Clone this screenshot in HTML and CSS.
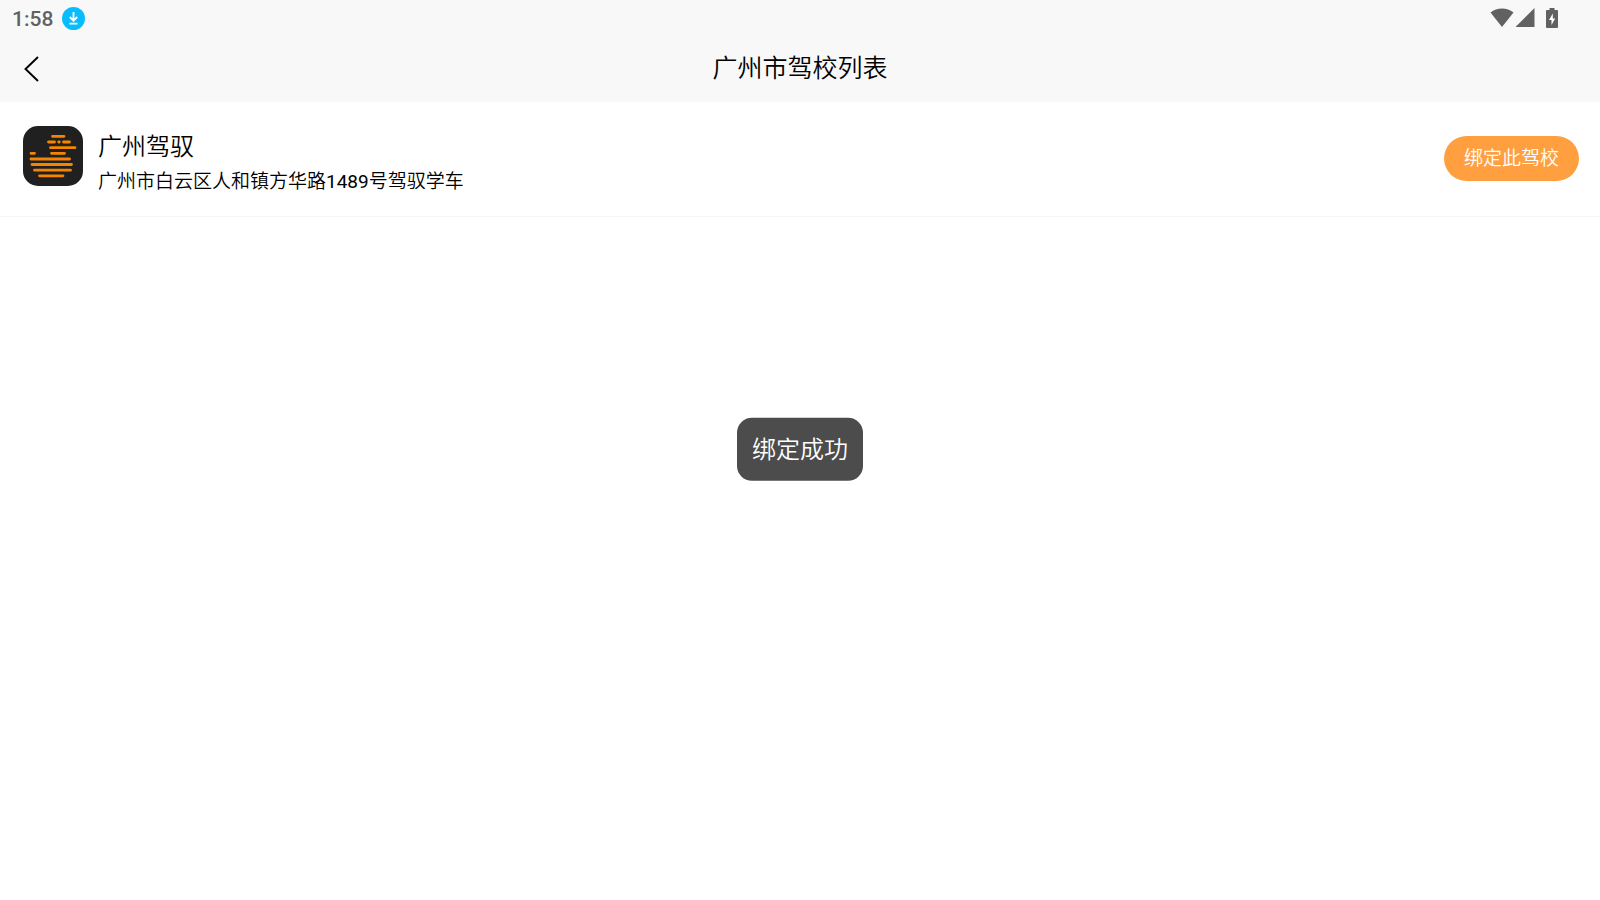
FILE: index.html
```html
<!DOCTYPE html>
<html lang="zh-CN">
<head>
<meta charset="utf-8">
<meta name="viewport" content="width=device-width, initial-scale=1">
<title>广州市驾校列表</title>
<link rel="stylesheet" href="styles.css">
</head>
<body>
<div class="top">
  <div class="status">
    <time class="clock">1:58</time>
    <svg class="download" viewBox="0 0 23 23" width="23" height="23" aria-hidden="true">
      <circle cx="11.5" cy="11.5" r="11.5" fill="#08bdfd"/>
      <path d="M11.5 5v8.500M7.800 10l3.700 3.800L15.200 10M7.500 16.700h8" fill="none" stroke="#fff" stroke-width="1.800"/>
    </svg>
    <div class="indicators">
      <svg viewBox="0 0 24 20" width="24" height="20" aria-hidden="true"><path d="M.5 4.500Q5.500.5 12 .5t11.500 4L12 19Z" fill="#616161"/></svg>
      <svg viewBox="0 0 20 20" width="20" height="20" aria-hidden="true"><path d="M19.500 0v19H.5Z" fill="#616161"/></svg>
      <svg class="battery" viewBox="0 0 12 20" width="12" height="20" aria-hidden="true"><path d="M3.500 0h5v2H11q1 0 1 1v16q0 1-1 1H1q-1 0-1-1V3q0-1 1-1h2.500Z" fill="#616161"/><path d="M6.800 5.500v5h2.400L5.500 17v-5H3Z" fill="#fff"/></svg>
    </div>
  </div>
  <header class="navbar">
    <button class="back" type="button" aria-label="返回">
      <svg viewBox="0 0 16 26" width="16" height="26" aria-hidden="true"><path d="M15 1L2.500 13 15 25" fill="none" stroke="#000" stroke-width="1.900"/></svg>
    </button>
    <h1 class="title">广州市驾校列表</h1>
  </header>
</div>
<main>
  <ul class="schools">
    <li class="school">
      <svg class="logo" viewBox="0 0 60 60" width="60" height="60" role="img" aria-label="广州驾驭">
        <rect width="60" height="60" rx="15" fill="#202020"/>
        <path d="M29.500 10.300h11.500M25.500 16h6M35.700 16h.6M40.500 16h6M27.500 21.700h24.500M8 27.300h3.500M28.500 27.300h13M8 33h38.500M9 38.500h39.500M11.500 44.200h36M16.500 49.800h23.500" fill="none" stroke="#f58400" stroke-width="2.800" stroke-linecap="round"/>
      </svg>
      <div class="info">
        <h2 class="name">广州驾驭</h2>
        <p class="address">广州市白云区人和镇方华路<span class="digits">1489</span>号驾驭学车</p>
      </div>
      <button class="bind" type="button">绑定此驾校</button>
    </li>
  </ul>
</main>
<div class="toast" role="status">绑定成功</div>
</body>
</html>
```
FILE: styles.css
```css
* {
  box-sizing: border-box;
}

body {
  margin: 0;
  background: #fff;
  color: #000;
  font-family: Roboto, "Noto Sans CJK SC", sans-serif;
  font-weight: 350;
}

h1, h2, p, ul {
  margin: 0;
  padding: 0;
  font-weight: inherit;
}

button {
  border: 0;
  font-family: inherit;
  font-weight: inherit;
  cursor: pointer;
}

svg {
  display: block;
}

.top {
  background: #f8f8f8;
}

.status {
  display: flex;
  align-items: center;
  height: 36px;
  padding: 0 42px 0 12px;
}

.clock {
  padding-top: 1px;
  color: #616161;
  font-size: 21px;
  font-weight: 500;
  line-height: 36px;
}

.download {
  margin-left: 9px;
}

.indicators {
  display: flex;
  gap: 1px;
  margin-left: auto;
}

.battery {
  margin-left: 10px;
}

.navbar {
  display: grid;
  grid-template-columns: 60px 1fr 60px;
  align-items: center;
  height: 66px;
}

.back {
  display: flex;
  align-items: center;
  height: 60px;
  padding: 0 0 0 23px;
  background: none;
}

.title {
  font-size: 25px;
  line-height: 36px;
  text-align: center;
}

.schools {
  list-style: none;
}

.school {
  display: flex;
  align-items: flex-start;
  gap: 15px;
  padding: 24px 21px 20px 23px;
  border-bottom: 1px solid #f5f5f5;
}

.logo {
  flex: none;
}

.info {
  flex: 1;
  min-width: 0;
  padding-top: 1px;
}

.name {
  font-size: 24px;
  line-height: 40px;
}

.address {
  font-size: 19px;
  line-height: 29px;
}

.digits {
  font-weight: 400;
}

.bind {
  flex: none;
  height: 45px;
  margin-top: 10px;
  padding: 0 20px 4px;
  border-radius: 23px;
  background: #ff9f40;
  color: #fff;
  font-size: 19px;
}

.toast {
  position: fixed;
  top: 50%;
  left: 50%;
  padding: 14px 15px 13px;
  border-radius: 15px;
  background: #4c4c4c;
  color: #fff;
  font-size: 24px;
  line-height: 36px;
  white-space: nowrap;
  transform: translate(-50%, -51%);
}
```
